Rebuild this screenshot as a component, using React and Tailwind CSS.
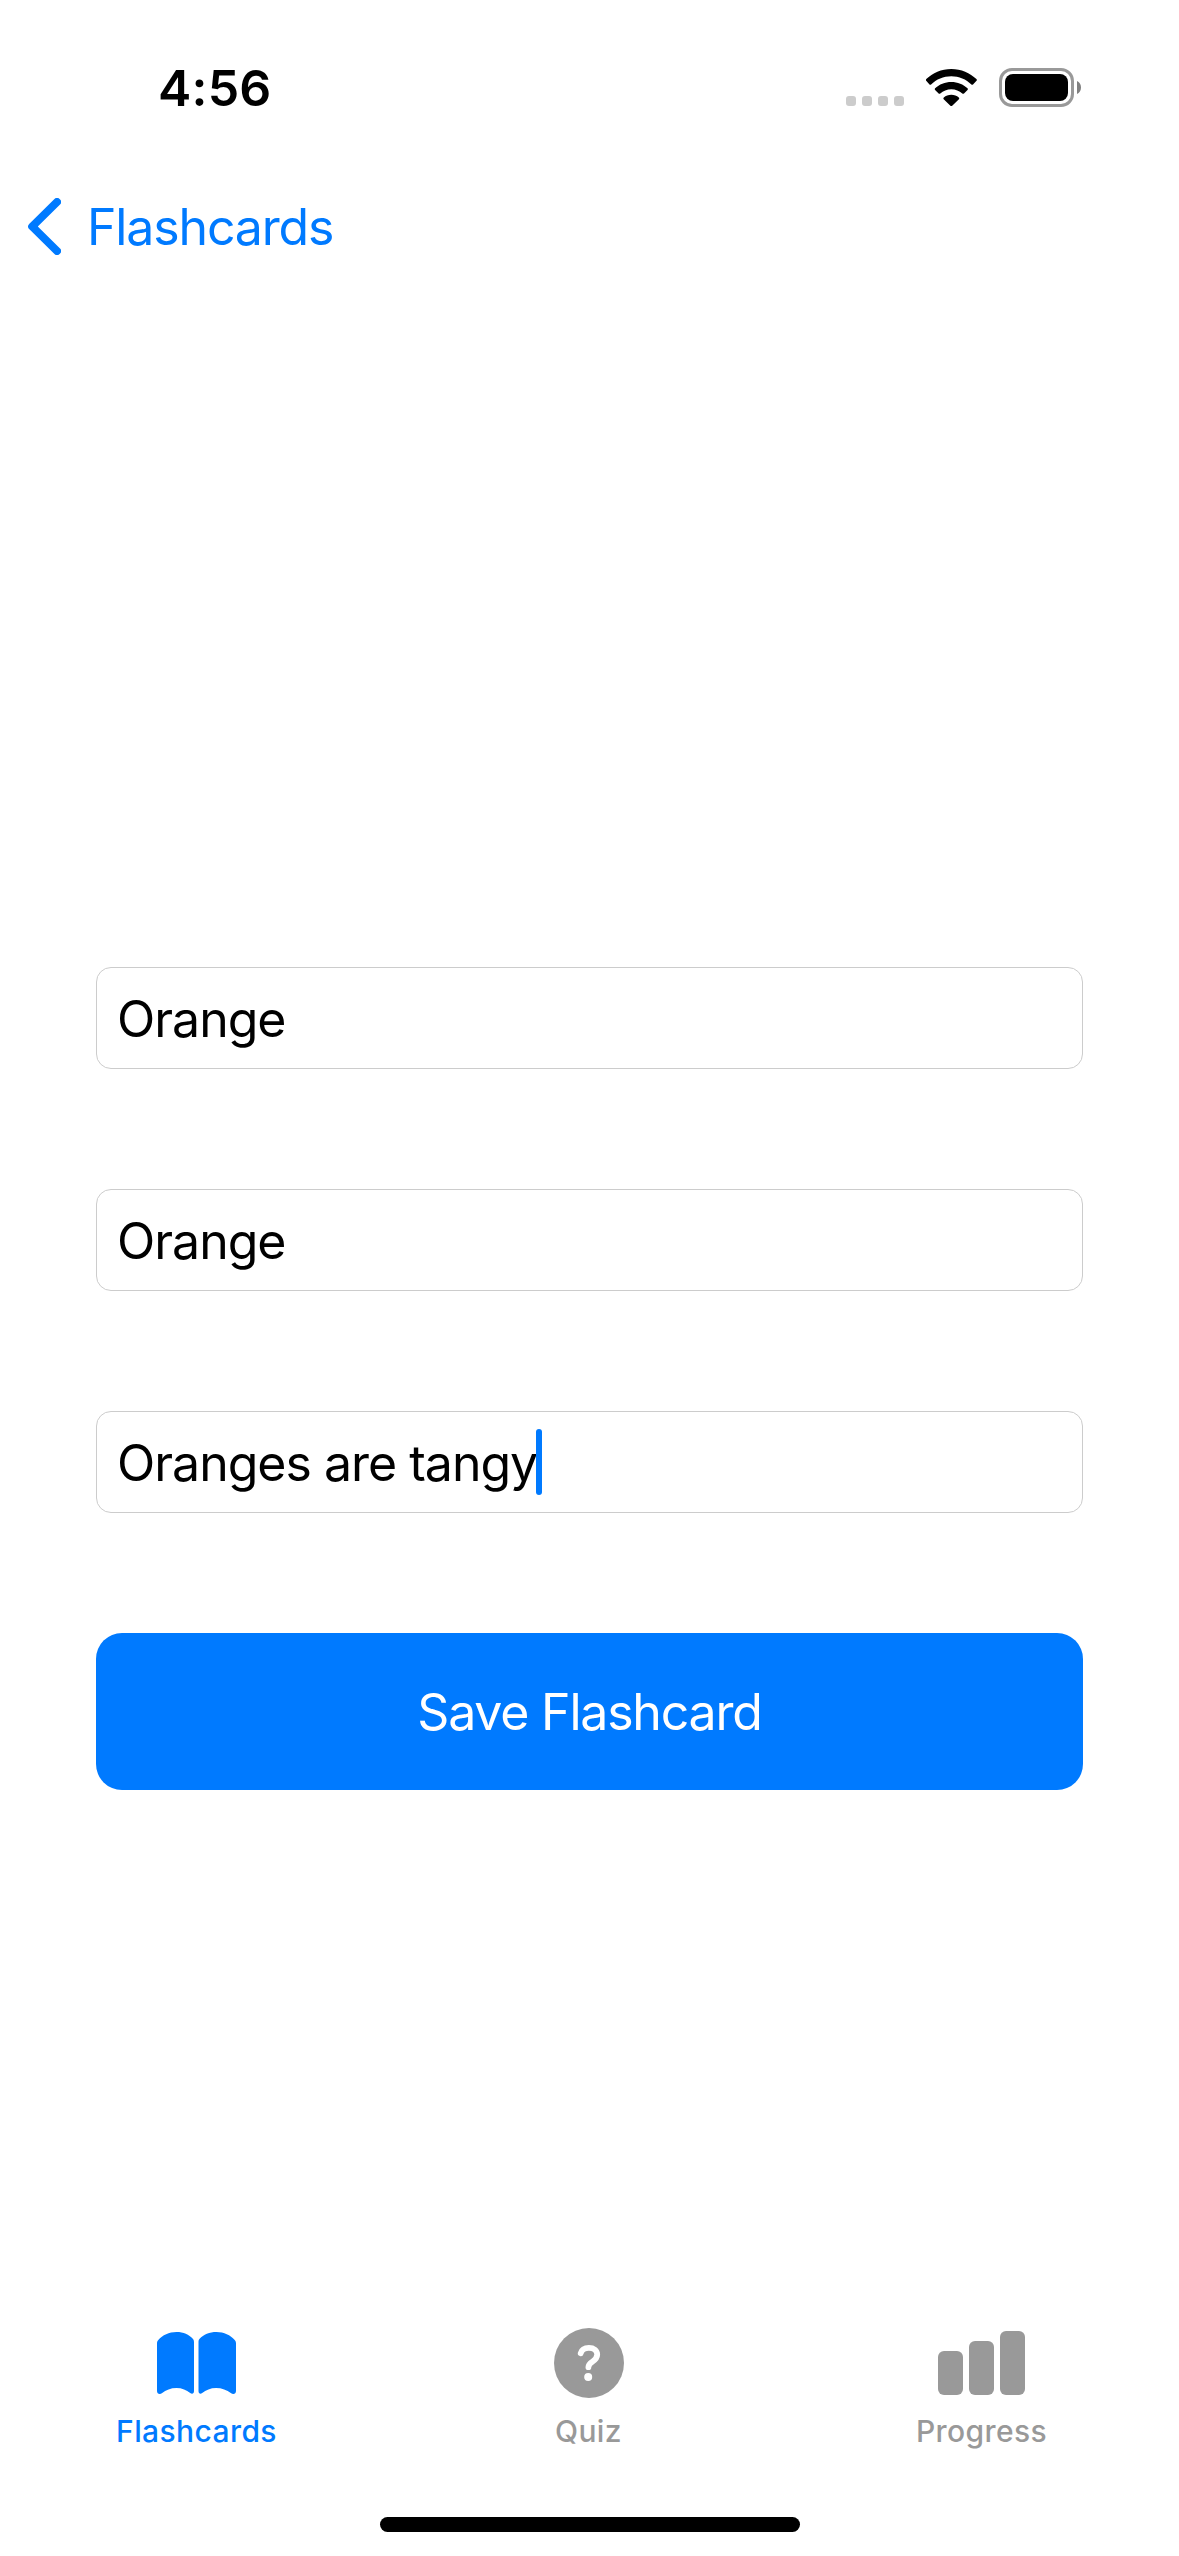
import React from 'react';

function StatusBar() {
  return (
    <header className="flex h-[176px] shrink-0 items-center justify-between pl-[158px] pr-[98px]">
      <span className="text-[50px] leading-[60px] font-semibold tracking-[0.200px] text-black">4:56</span>
      <div className="flex h-[60px] items-center">
        <div className="mt-[26px] flex gap-[6px]">
          {[0, 1, 2, 3].map((dot) => (
            <span key={dot} className="size-[10px] rounded-[3px] bg-[#cccccc]" />
          ))}
        </div>
        <svg className="ml-[22px] h-[38px] w-[51px]" viewBox="0 0 51 38" fill="#000">
          <path d="M25.3 0C35.200 0 44 4 50.400 10.100c.6.5.6 1.200.1 1.700l-3.500 3.600c-.5.4-1.100.4-1.600 0C40.200 10.300 33.100 7.200 25.300 7.200S10.300 10.300 5.100 15.400c-.5.4-1.100.4-1.600 0L.2 11.800c-.5-.5-.5-1.200.1-1.700C6.600 4 15.400 0 25.300 0z" />
          <path d="M25.300 13c6.300 0 12 2.400 16.200 6.300.5.5.5 1.200 0 1.700L38 24.400c-.5.500-1.200.500-1.700.1-2.900-2.600-6.700-4.200-11-4.200s-8.100 1.600-11 4.200c-.5.4-1.200.4-1.700-.1l-3.500-3.400c-.5-.5-.5-1.200 0-1.700 4.200-3.900 9.900-6.300 16.200-6.300z" />
          <path d="M25.300 25.800c2.900 0 5.500 1 7.500 2.700.5.5.6 1.200.1 1.700l-6.700 6.500c-.5.5-1.300.5-1.800 0l-6.700-6.500c-.5-.5-.4-1.200.1-1.700 2-1.700 4.600-2.700 7.500-2.700z" />
        </svg>
        <div className="mb-px ml-[22px] flex items-center gap-[3px]">
          <div className="h-[39px] w-[75px] rounded-[13px] border-[3px] border-[#999999] p-[3px]">
            <div className="h-full w-full rounded-[8px] bg-black" />
          </div>
          <svg className="h-[13px] w-[4px]" viewBox="0 0 4 13" fill="#808080">
            <path d="M0 0C2.400 1 4 3.500 4 6.500S2.400 12 0 13z" />
          </svg>
        </div>
      </div>
    </header>
  );
}

function BackButton() {
  return (
    <nav className="flex h-[102px] shrink-0 items-center pl-[28px]">
      <button type="button" className="flex items-center text-[#007aff]">
        <svg className="mb-px h-[57px] w-[33px]" viewBox="0 0 33 57" fill="none">
          <path
            d="M29 4L4.200 28.500L29 53"
            stroke="currentColor"
            strokeWidth="8"
            strokeLinecap="round"
            strokeLinejoin="round"
          />
        </svg>
        <span className="ml-[26px] text-[50px] leading-[60px] tracking-[-1.150px]">Flashcards</span>
      </button>
    </nav>
  );
}

function Field({ value, focused }) {
  return (
    <div className="flex h-[102px] items-center rounded-[15px] border border-[#cccccc] bg-white pt-[2px] pl-[20px]">
      <span className="relative text-[50px] leading-[60px] tracking-[-1px] whitespace-pre text-black">
        {value}
        {focused && (
          <span className="absolute -top-[4px] -right-[4.800px] h-[66px] w-[6px] rounded-full bg-[#007aff]" />
        )}
      </span>
    </div>
  );
}

function BookIcon() {
  return (
    <svg className="h-[63px] w-[79px]" viewBox="0 0 79 63" fill="currentColor">
      <path d="M0 11.500C0 10 .4 9 1.300 8 5.500 3 12 0 19.500 0c7 0 12.500 2.400 16.300 6.800C36.700 7.900 37 8.800 37 10.200V59c0 2.500-1.800 3.500-3.800 2C29.500 58 25 56 19.500 56c-5.800 0-10.700 2-14.300 5C2.800 63 0 62 0 59z" />
      <path d="M79 11.500c0-1.500-.4-2.500-1.300-3.500C73.500 3 67 0 59.500 0 52.500 0 46.500 2.400 42.600 6.800 41.700 7.900 41.500 8.800 41.500 10.200V59c0 2.500 1.800 3.500 3.700 2C49 58 53.500 56 59 56c5.800 0 11 2 14.800 5 2.400 2 5.200 1 5.200-2z" />
    </svg>
  );
}

function QuestionIcon() {
  return (
    <svg className="h-[70px] w-[70px]" viewBox="0 0 70 70" fill="none">
      <circle cx="35" cy="35" r="35" fill="currentColor" />
      <path
        d="M26.700 25.300C27.700 21.700 30.800 19.900 34.900 19.900c4.900 0 8.300 2.700 8.300 6.700 0 3.400-1.900 5.200-4.700 7-2.800 1.800-4.100 3.200-4.100 5.600"
        stroke="#fff"
        strokeWidth="5.800"
        strokeLinecap="round"
        strokeLinejoin="round"
      />
      <circle cx="34.200" cy="49" r="4" fill="#fff" />
    </svg>
  );
}

function BarsIcon() {
  return (
    <svg className="h-[64px] w-[87px]" viewBox="0 0 87 64" fill="currentColor">
      <rect x="0" y="20" width="25" height="44" rx="6" />
      <rect x="31" y="10" width="25" height="54" rx="6" />
      <rect x="62" y="0" width="25" height="64" rx="6" />
    </svg>
  );
}

const tabs = [
  { label: 'Flashcards', Icon: BookIcon, active: true },
  { label: 'Quiz', Icon: QuestionIcon, active: false },
  { label: 'Progress', Icon: BarsIcon, active: false },
];

function TabBar() {
  return (
    <footer className="grid h-[189px] shrink-0 grid-cols-3">
      {tabs.map(({ label, Icon, active }) => (
        <button
          key={label}
          type="button"
          className={
            active
              ? 'flex flex-col items-center text-[#007aff]'
              : 'flex flex-col items-center pr-[2px] text-[#999999]'
          }
        >
          <span className="flex h-[70px] items-center">
            <Icon />
          </span>
          <span className="mt-[15px] text-[30px] leading-[36px] font-medium tracking-[0.400px]">{label}</span>
        </button>
      ))}
    </footer>
  );
}

export default function App() {
  return (
    <div className="flex h-[2556px] w-[1179px] flex-col overflow-hidden bg-white font-['Inter',sans-serif]">
      <StatusBar />
      <BackButton />
      <main className="flex flex-1 flex-col gap-[120px] px-[96px] pt-[689px]">
        <Field value="Orange" />
        <Field value="Orange" />
        <Field value="Oranges are tangy" focused />
        <button
          type="button"
          className="flex h-[157px] items-center justify-center rounded-[26px] bg-[#007aff] pt-px text-[50px] leading-[60px] tracking-[-1.200px] text-white"
        >
          Save Flashcard
        </button>
      </main>
      <TabBar />
      <div className="mb-[24px] flex shrink-0 justify-center">
        <div className="h-[15px] w-[420px] rounded-full bg-black" />
      </div>
    </div>
  );
}
